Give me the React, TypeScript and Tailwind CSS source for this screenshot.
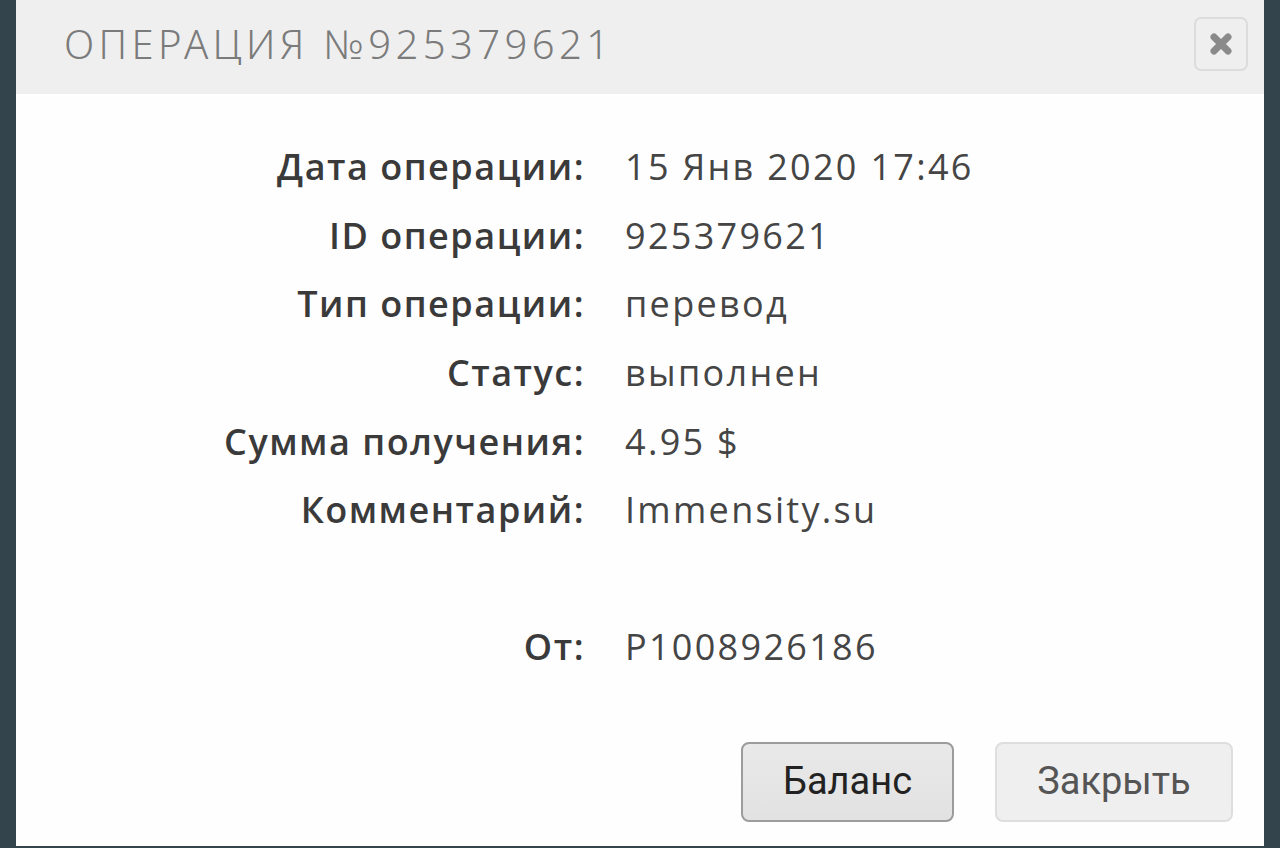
const rows: [string, string][] = [
  ["Дата операции:", "15 Янв 2020 17:46"],
  ["ID операции:", "925379621"],
  ["Тип операции:", "перевод"],
  ["Статус:", "выполнен"],
  ["Сумма получения:", "4.95 $"],
  ["Комментарий:", "Immensity.su"],
  ["", ""],
  ["От:", "P1008926186"],
];

export default function App() {
  return (
    <div className="h-[848px] w-full bg-[#34444c] px-[16px] overflow-hidden">
      <div className="h-[846px] w-full bg-[#fefefe] flex flex-col">
        <div className="h-[94px] bg-[#efefef] flex items-center justify-between pl-[48px] pr-[16px]">
          <h1 className="text-[40px] leading-none tracking-[4.4px] text-[#7b7b7b] font-['Noto_Sans',sans-serif] font-light -mt-[6px]">
            ОПЕРАЦИЯ №925379621
          </h1>
          <button className="w-[54px] h-[54px] -mt-[6px] rounded-[7px] border-2 border-[#dcdcdc] bg-[#efefef] flex items-center justify-center">
            <svg width="24" height="24" viewBox="0 0 24 24">
              <path d="M5 5 L19 19 M19 5 L5 19" stroke="#8a8a8a" strokeWidth="7" strokeLinecap="round" />
            </svg>
          </button>
        </div>
        <div className="pt-[39px] grid grid-cols-[569px_1fr] gap-x-[40px] font-['Open_Sans',sans-serif] text-[36px]">
          {rows.map(([label, value], i) => (
            <div key={i} className="contents">
              <div className="h-[68.6px] flex items-center justify-end font-semibold tracking-[1.5px] text-[#3a3a3a]">{label}</div>
              <div className="h-[68.6px] flex items-center tracking-[2.3px] text-[#454545]">{value}</div>
            </div>
          ))}
        </div>
        <div className="mt-[60px] flex justify-end gap-[41px] pr-[31px] font-['Roboto',sans-serif] text-[38px]">
          <button className="w-[213px] h-[80px] rounded-[8px] border-2 border-[#9c9c9c] bg-gradient-to-b from-[#e9e9e9] to-[#e2e2e2] text-[#222]">
            Баланс
          </button>
          <button className="w-[238px] h-[80px] rounded-[8px] border-2 border-[#dedede] bg-[#efefef] text-[#555]">
            Закрыть
          </button>
        </div>
      </div>
    </div>
  );
}
